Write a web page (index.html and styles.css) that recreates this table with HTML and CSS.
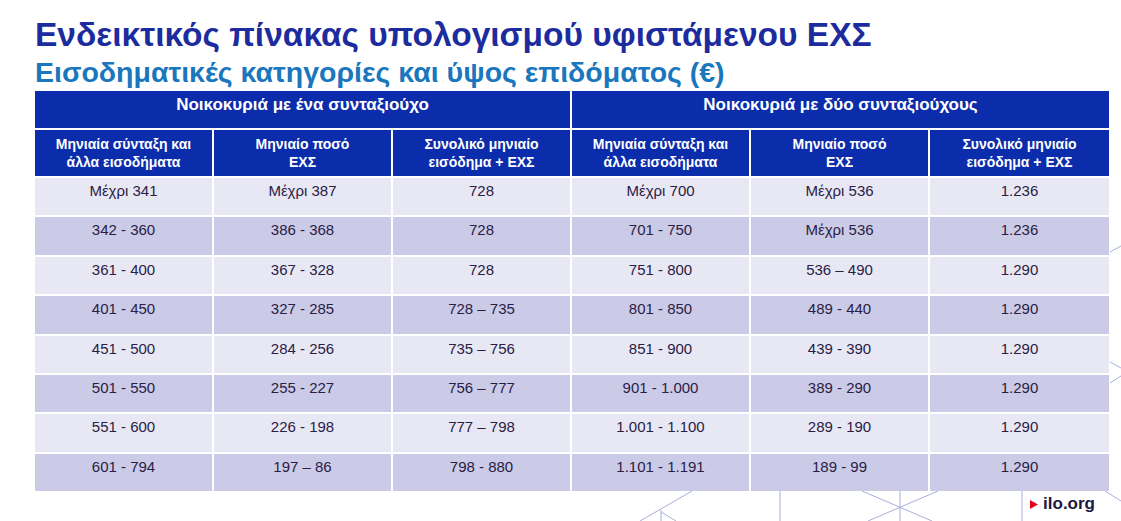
FILE: index.html
```html
<!DOCTYPE html>
<html lang="el">
<head>
<meta charset="utf-8">
<title>Ενδεικτικός πίνακας υπολογισμού υφιστάμενου ΕΧΣ</title>
<link rel="stylesheet" href="styles.css">
</head>
<body>
<div class="slide">
  <svg class="deco" width="1121" height="521" viewBox="0 0 1121 521" aria-hidden="true">
    <g stroke="#a9aedb" stroke-width="1" fill="none">
      <line x1="692" y1="491" x2="640" y2="521"/>
      <line x1="661" y1="510" x2="661" y2="521"/>
      <line x1="661" y1="512" x2="676" y2="521"/>
      <line x1="780" y1="491" x2="780" y2="521"/>
      <line x1="862" y1="491" x2="932" y2="521"/>
      <line x1="938" y1="491" x2="868" y2="521"/>
      <line x1="900" y1="491" x2="900" y2="521"/>
      <line x1="1022" y1="491" x2="1022" y2="521"/>
      <line x1="1105" y1="491" x2="1121" y2="501"/>
      <line x1="1110" y1="252" x2="1121" y2="246"/>
      <line x1="1110" y1="362" x2="1121" y2="368"/>
      <line x1="1110" y1="383" x2="1121" y2="376"/>
    </g>
  </svg>

  <h1 class="title">Ενδεικτικός πίνακας υπολογισμού υφιστάμενου ΕΧΣ</h1>
  <h2 class="subtitle">Εισοδηματικές κατηγορίες και ύψος επιδόματος (€)</h2>

  <table class="grid">
    <colgroup>
      <col><col><col><col><col><col>
    </colgroup>
    <thead>
      <tr class="group">
        <th colspan="3">Νοικοκυριά με ένα συνταξιούχο</th>
        <th colspan="3">Νοικοκυριά με δύο συνταξιούχους</th>
      </tr>
      <tr class="heads">
        <th>Μηνιαία σύνταξη και<br>άλλα εισοδήματα</th>
        <th>Μηνιαίο ποσό<br>ΕΧΣ</th>
        <th>Συνολικό μηνιαίο<br>εισόδημα + ΕΧΣ</th>
        <th>Μηνιαία σύνταξη και<br>άλλα εισοδήματα</th>
        <th>Μηνιαίο ποσό<br>ΕΧΣ</th>
        <th>Συνολικό μηνιαίο<br>εισόδημα + ΕΧΣ</th>
      </tr>
    </thead>
    <tbody>
      <tr><td>Μέχρι 341</td><td>Μέχρι 387</td><td>728</td><td>Μέχρι 700</td><td>Μέχρι 536</td><td>1.236</td></tr>
      <tr><td>342 - 360</td><td>386 - 368</td><td>728</td><td>701 - 750</td><td>Μέχρι 536</td><td>1.236</td></tr>
      <tr><td>361 - 400</td><td>367 - 328</td><td>728</td><td>751 - 800</td><td>536 – 490</td><td>1.290</td></tr>
      <tr><td>401 - 450</td><td>327 - 285</td><td>728 – 735</td><td>801 - 850</td><td>489 - 440</td><td>1.290</td></tr>
      <tr><td>451 - 500</td><td>284 - 256</td><td>735 – 756</td><td>851 - 900</td><td>439 - 390</td><td>1.290</td></tr>
      <tr><td>501 - 550</td><td>255 - 227</td><td>756 – 777</td><td>901 - 1.000</td><td>389 - 290</td><td>1.290</td></tr>
      <tr><td>551 - 600</td><td>226 - 198</td><td>777 – 798</td><td>1.001 - 1.100</td><td>289 - 190</td><td>1.290</td></tr>
      <tr><td>601 - 794</td><td>197 – 86</td><td>798 - 880</td><td>1.101 - 1.191</td><td>189 - 99</td><td>1.290</td></tr>
    </tbody>
  </table>

  <div class="footer">
    <span class="brand">
      <svg class="brand-mark" width="8" height="9" viewBox="0 0 8 9" aria-hidden="true"><polygon points="0,0 8,4.5 0,9" fill="#e3001b"/></svg>
      <span class="brand-text">ilo.org</span>
    </span>
  </div>
</div>
</body>
</html>
```

FILE: styles.css
```css
* { box-sizing: border-box; }

html, body {
  margin: 0;
  padding: 0;
  background: #ffffff;
}

.slide {
  position: relative;
  width: 1121px;
  height: 521px;
  overflow: hidden;
  padding: 16px 12px 0 35px;
  font-family: "Liberation Sans", Arial, sans-serif;
  background: #ffffff;
}

.deco {
  position: absolute;
  left: 0;
  top: 0;
  z-index: 0;
}

.title {
  position: relative;
  margin: 0;
  font-size: 33.5px;
  line-height: 38px;
  font-weight: bold;
  color: #1c2c9e;
  white-space: nowrap;
}

.subtitle {
  position: relative;
  margin: 2px 0 0 0;
  font-size: 28.5px;
  line-height: 32px;
  font-weight: bold;
  color: #1a76bd;
  white-space: nowrap;
}

.grid {
  position: relative;
  z-index: 1;
  margin-top: 3px;
  width: 1074px;
  table-layout: fixed;
  border-collapse: separate;
  border-spacing: 0;
}

.grid col { width: 179px; }

.grid th,
.grid td {
  padding: 0;
  text-align: center;
  border-right: 2px solid #ffffff;
  border-bottom: 2px solid #ffffff;
}

.grid th:last-child,
.grid td:last-child {
  border-right: none;
}

.group th {
  height: 39px;
  padding-top: 3px;
  vertical-align: top;
  background: #0b2cab;
  color: #ffffff;
  font-size: 17px;
  line-height: 21px;
  font-weight: bold;
}

.heads th {
  height: 48px;
  vertical-align: middle;
  background: #0b2cab;
  color: #ffffff;
  font-size: 14px;
  line-height: 18px;
  font-weight: bold;
}

.grid td {
  height: 39.4px;
  padding-top: 4px;
  vertical-align: top;
  font-size: 15px;
  line-height: 18px;
  color: #2a2046;
}

.grid tbody tr:nth-child(odd) td { background: #e8e8f4; }
.grid tbody tr:nth-child(even) td { background: #cbcbe7; }

.grid tbody tr:last-child td {
  height: 37.4px;
  border-bottom: none;
}

.footer {
  position: relative;
  z-index: 1;
  display: flex;
  justify-content: flex-end;
  padding-right: 14px;
  margin-top: 2px;
}

.brand {
  display: flex;
  align-items: center;
  gap: 5px;
}

.brand-mark { display: block; }

.brand-text {
  font-size: 17px;
  line-height: 22px;
  font-weight: bold;
  color: #1d1840;
}
```
